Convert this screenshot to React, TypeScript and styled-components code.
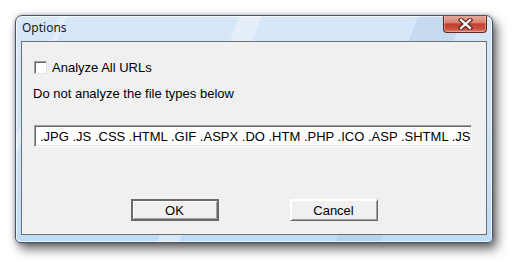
import * as React from 'react';
import styled, { createGlobalStyle } from 'styled-components';

const GLOBAL = createGlobalStyle`
  html, body {
    margin: 0;
    padding: 0;
    background: #ffffff;
  }
`;

const PAGE = styled.div`
  width: 512px;
  height: 262px;
  padding: 15px 0 0 15px;
  box-sizing: border-box;
`;

const WINDOW = styled.div`
  width: 478px;
  height: 228px;
  box-sizing: border-box;
  border: 1px solid #4a5563;
  border-radius: 7px 7px 5px 5px;
  background:
    linear-gradient(110deg, transparent 0 8%, rgba(255,255,255,0.35) 8% 9%, transparent 9% 40%, rgba(255,255,255,0.35) 40% 44%, transparent 44% 72%, rgba(150,180,215,0.25) 72% 80%, transparent 80%),
    linear-gradient(180deg, #d6e7f8 0%, #cfe3f7 60%, #bfdcf6 100%);
  display: flex;
  flex-direction: column;
  overflow: hidden;
  box-shadow: 4px 6px 11px rgba(0, 0, 0, 0.6), 0 0 4px rgba(0, 0, 0, 0.3), inset 0 0 0 1px rgba(255, 255, 255, 0.7);
`;

const TITLEBAR = styled.div`
  height: 25px;
  display: flex;
  justify-content: space-between;
  align-items: flex-start;
  padding: 0 5px 0 6px;
`;

const TITLE = styled.span`
  font-family: "Noto Sans", "Open Sans", sans-serif;
  font-size: 12px;
  color: #1a1a1a;
  line-height: 16px;
  margin-top: 4px;
`;

const CLOSEBUTTON = styled.div`
  width: 44px;
  height: 18px;
  box-sizing: border-box;
  margin-top: -1px;
  border: 1px solid #5c2a22;
  border-top: none;
  border-radius: 0 0 4px 4px;
  background: linear-gradient(180deg, #e9ad9f 0%, #d88474 45%, #c23f2d 52%, #c9503f 80%, #e0806a 100%);
  box-shadow: inset 0 0 0 1px rgba(255, 255, 255, 0.3);
  display: flex;
  align-items: center;
  justify-content: center;
`;

const CLIENT = styled.div`
  flex: 1;
  margin: 0 5px 7px 5px;
  border: 1px solid #707070;
  background: #f0f0f0;
  display: flex;
  flex-direction: column;
  font-family: "Liberation Sans", Arial, sans-serif;
  font-size: 13px;
  color: #000;
`;

const CHECKROW = styled.label`
  display: flex;
  align-items: center;
  margin: 19px 0 0 12px;
  height: 13px;
  line-height: 15px;
`;

const CHECKBOX = styled.span`
  width: 13px;
  height: 13px;
  box-sizing: border-box;
  background: #ffffff;
  border: 1px solid;
  border-color: #a0a0a0 #e3e3e3 #e3e3e3 #a0a0a0;
  box-shadow: inset 1px 1px 0 #696969;
  margin-right: 5px;
`;

const LABEL = styled.div`
  margin: 12px 0 0 11px;
  line-height: 15px;
`;

const FIELD = styled.input`
  margin: 24px 0 0 12px;
  width: 438px;
  height: 22px;
  box-sizing: border-box;
  border: 1px solid;
  border-color: #a0a0a0 #ffffff #ffffff #a0a0a0;
  box-shadow: inset 1px 1px 0 #696969, inset -1px -1px 0 #e3e3e3;
  background: #ffffff;
  padding: 0 0 0 5px;
  font-family: "Liberation Sans", Arial, sans-serif;
  font-size: 13px;
  color: #000;
  outline: none;
`;

const BUTTONROW = styled.div`
  display: flex;
  justify-content: center;
  gap: 71px;
  margin-top: 52px;
`;

const BUTTON = styled.div<{ $default?: boolean }>`
  width: 88px;
  height: 22px;
  box-sizing: border-box;
  display: flex;
  align-items: center;
  justify-content: center;
  background: #f0f0f0;
  border-style: solid;
  border-color: ${(p) => (p.$default ? '#6a6a6a' : '#ffffff #696969 #696969 #ffffff')};
  border-width: ${(p) => (p.$default ? '2px' : '1px')};
  box-shadow: inset 1px 1px 0 #ffffff, inset -1px -1px 0 #a0a0a0;
  font-size: 13px;
  line-height: 15px;
`;

const CloseGlyph = () => (
  <svg width="15" height="12" viewBox="0 0 15 12">
    <path d="M3 2 L12 10 M12 2 L3 10" stroke="#4a1a12" strokeWidth="4.5" strokeLinecap="square" />
    <path d="M3 2 L12 10 M12 2 L3 10" stroke="#f4f4f4" strokeWidth="2.4" strokeLinecap="square" />
  </svg>
);

const App: React.FunctionComponent = () => {
  return (
    <PAGE>
      <GLOBAL />
      <WINDOW>
        <TITLEBAR>
          <TITLE>Options</TITLE>
          <CLOSEBUTTON>
            <CloseGlyph />
          </CLOSEBUTTON>
        </TITLEBAR>
        <CLIENT>
          <CHECKROW>
            <CHECKBOX />
            Analyze All URLs
          </CHECKROW>
          <LABEL>Do not analyze the file types below</LABEL>
          <FIELD
            readOnly
            value=".JPG .JS .CSS .HTML .GIF .ASPX .DO .HTM .PHP .ICO .ASP .SHTML .JSP .CGI"
          />
          <BUTTONROW>
            <BUTTON $default>OK</BUTTON>
            <BUTTON>Cancel</BUTTON>
          </BUTTONROW>
        </CLIENT>
      </WINDOW>
    </PAGE>
  );
};

export default App;
